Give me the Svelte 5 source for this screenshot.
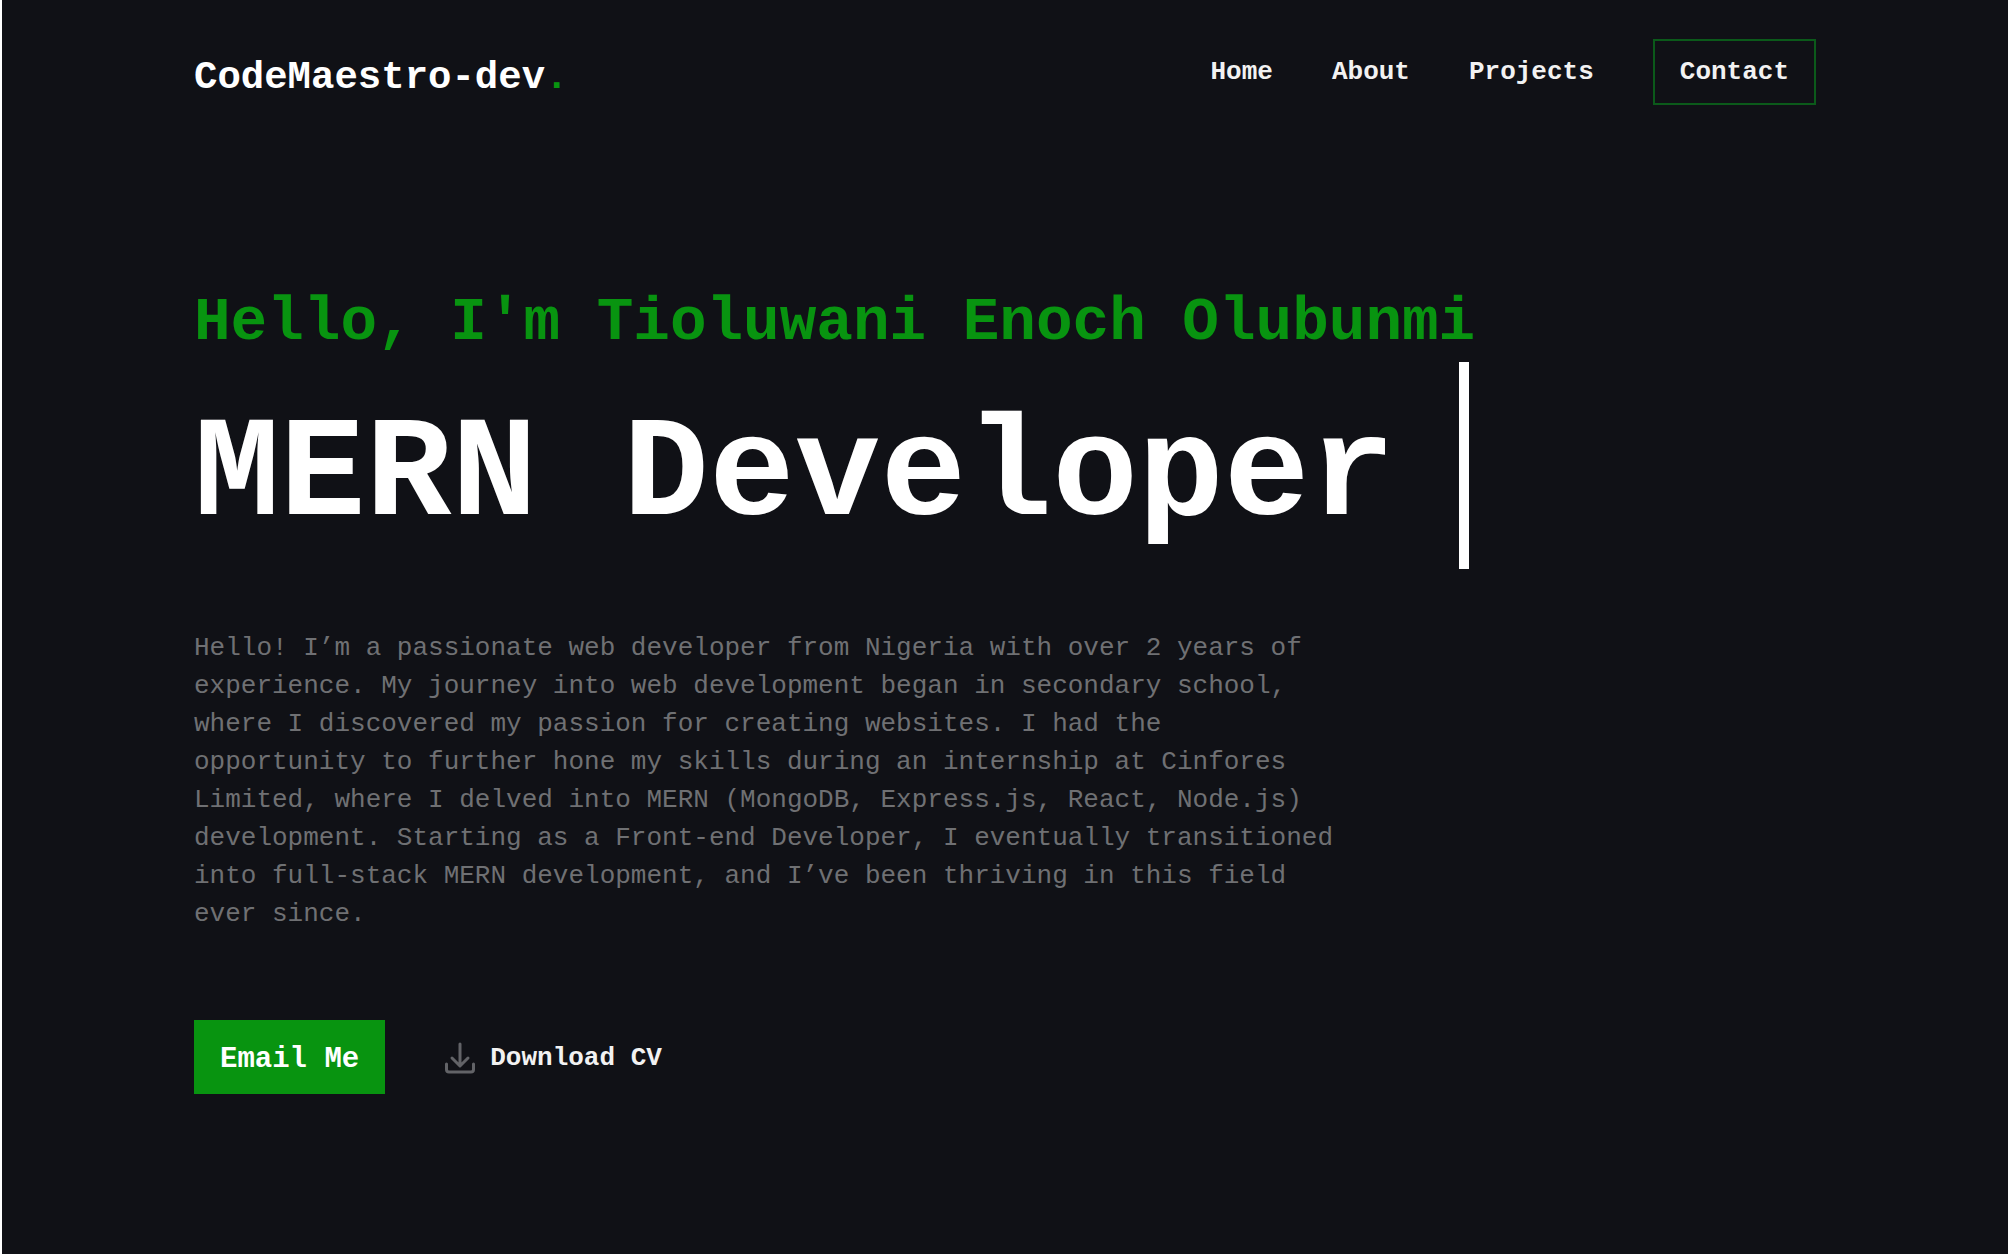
<script>
  const links = ['Home', 'About', 'Projects'];
</script>

<div class="page">
  <header>
    <a class="logo" href="#home">CodeMaestro-dev<span class="dot">.</span></a>
    <nav aria-label="Main">
      {#each links as link}
        <a class="link" href={'#' + link.toLowerCase()}>{link}</a>
      {/each}
      <a class="link boxed" href="#contact">Contact</a>
    </nav>
  </header>

  <main>
    <p class="hello">Hello, I'm Tioluwani Enoch Olubunmi</p>
    <div class="title">
      <h1>MERN Developer</h1>
      <span class="cursor"></span>
    </div>
    <p class="bio">
      Hello! I’m a passionate web developer from Nigeria with over 2 years of experience. My journey
      into web development began in secondary school, where I discovered my passion for creating
      websites. I had the opportunity to further hone my skills during an internship at Cinfores
      Limited, where I delved into MERN (MongoDB, Express.js, React, Node.js) development. Starting
      as a Front-end Developer, I eventually transitioned into full-stack MERN development, and I’ve
      been thriving in this field ever since.
    </p>
    <div class="actions">
      <button type="button" class="email">Email Me</button>
      <a class="download" href="#cv">
        <svg viewBox="0 0 30 32" width="30" height="32" aria-hidden="true">
          <path d="M15 2V23M7 16L15 24L23 16M1.500 22V27.500Q1.500 30 4 30H26Q28.500 30 28.500 27.500V22" />
        </svg>
        <span>Download CV</span>
      </a>
    </div>
  </main>
</div>

<style>
  :global(body) {
    background: #fff;
  }
  .page {
    box-sizing: border-box;
    min-height: 100vh;
    margin: 0 2px;
    padding: 39px 192px;
    background: #101116;
    color: #fff;
    font-family: 'Liberation Mono', 'Courier New', monospace;
  }
  header {
    display: flex;
    justify-content: space-between;
    align-items: flex-start;
  }
  a {
    color: inherit;
    text-decoration: none;
  }
  .logo {
    font-size: 39px;
    line-height: 78px;
    font-weight: 700;
  }
  .dot {
    color: #089410;
  }
  nav {
    display: flex;
    gap: 59px;
  }
  .link {
    padding: 2px 0;
    font-size: 26px;
    line-height: 62px;
    font-weight: 700;
    color: #f2f2f2;
  }
  .boxed {
    padding: 0 25px;
    border: 2px solid #0b5a1a;
  }
  main {
    padding-top: 166px;
  }
  p,
  h1 {
    margin: 0;
  }
  .hello {
    font-size: 61px;
    line-height: 79px;
    font-weight: 700;
    color: #089410;
  }
  .title {
    display: flex;
    align-items: flex-end;
    gap: 64px;
  }
  h1 {
    font-size: 143px;
    line-height: 186px;
    font-weight: 700;
  }
  .cursor {
    width: 10px;
    height: 207px;
    background: #fff;
  }
  .bio {
    max-width: 1146px;
    margin-top: 60px;
    font-size: 26px;
    line-height: 38px;
    color: #6f7073;
  }
  .actions {
    display: flex;
    align-items: center;
    gap: 60px;
    margin-top: 87px;
  }
  .email {
    padding: 6px 26px 0;
    border: 0;
    background: #089410;
    color: #fff;
    font-family: inherit;
    font-size: 29px;
    line-height: 68px;
    font-weight: 700;
  }
  .download {
    display: flex;
    align-items: center;
    gap: 15px;
    padding-top: 2px;
    font-size: 26px;
    line-height: 32px;
    font-weight: 700;
    color: #f2f2f2;
  }
  svg {
    fill: none;
    stroke: #626367;
    stroke-width: 3;
    stroke-linecap: round;
    stroke-linejoin: round;
  }
</style>
